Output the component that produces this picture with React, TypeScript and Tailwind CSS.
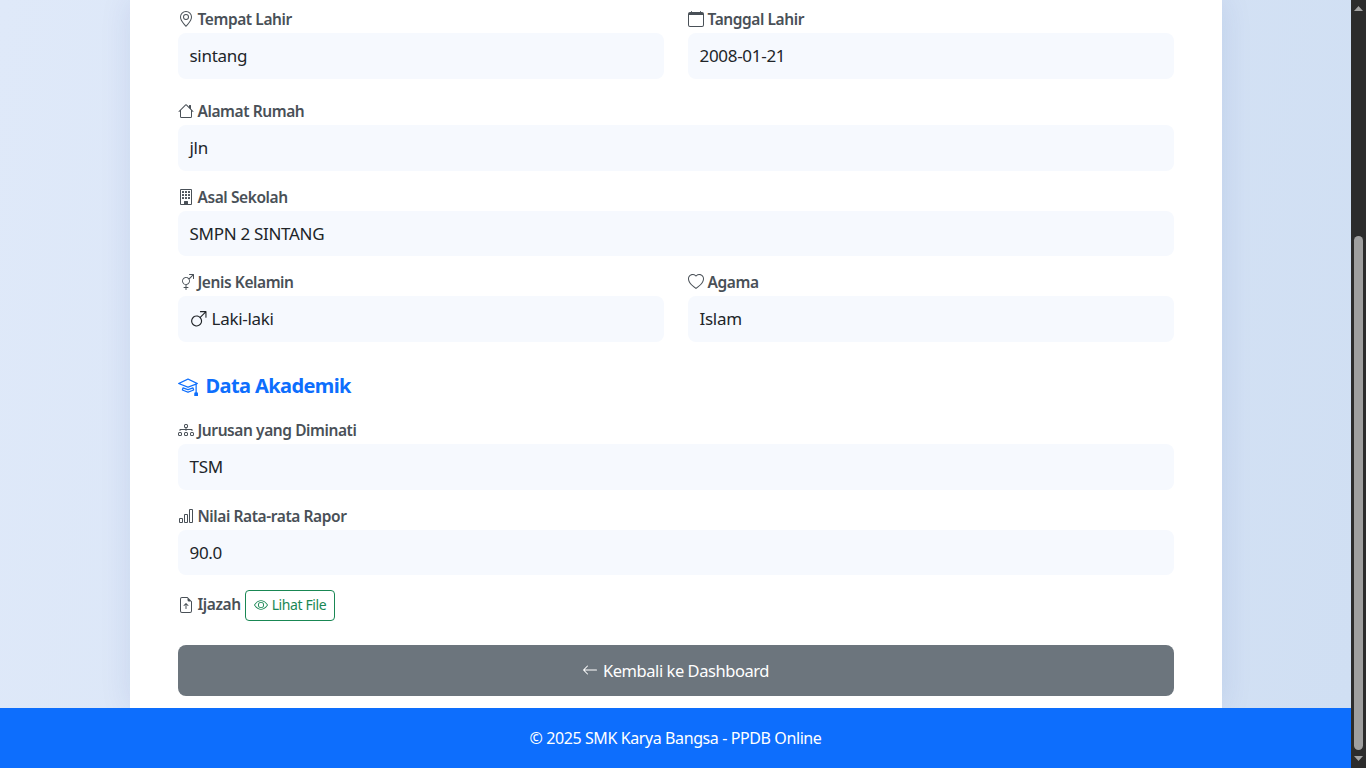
import React from "react";
import {
  BsArrowLeft,
  BsBarChart,
  BsBuilding,
  BsCalendar,
  BsDiagram3,
  BsEye,
  BsFileEarmarkArrowUp,
  BsGenderAmbiguous,
  BsGenderMale,
  BsGeoAlt,
  BsHeart,
  BsHouse,
  BsMortarboard,
} from "react-icons/bs";

type FieldProps = {
  icon: React.ReactNode;
  label: string;
  children: React.ReactNode;
};

function Field({ icon, label, children }: FieldProps) {
  return (
    <div className="min-w-0 flex-1">
      <div className="mb-1 flex h-5 items-center gap-1 text-[15.5px] font-semibold tracking-[-0.42px] text-[#495057]">
        {icon}
        <span className="pt-[2px]">{label}</span>
      </div>
      <div className="flex h-[45.5px] items-center gap-[4.5px] rounded-lg bg-[#f6f9fe] px-3 text-[17px] tracking-[-0.3px] text-[#212529]">
        {children}
      </div>
    </div>
  );
}

export default function App() {
  return (
    <div className="flex h-screen overflow-hidden font-['Noto_Sans',sans-serif] text-base">
      <div className="flex min-w-0 flex-1 flex-col">
        {/* scrolled form area */}
        <main className="flex flex-1 justify-center overflow-hidden bg-[linear-gradient(100deg,#dfe9f9,#d0dff3)]">
          <div className="flex h-full w-[1092px] flex-col bg-white px-12 pt-[9px] pb-3 shadow-[0_0_30px_rgba(0,50,150,0.1)]">
            <div className="flex gap-6">
              <Field icon={<BsGeoAlt className="h-4 w-4" />} label="Tempat Lahir">sintang</Field>
              <Field icon={<BsCalendar className="h-4 w-4" />} label="Tanggal Lahir">2008-01-21</Field>
            </div>

            <div className="mt-[22.5px]">
              <Field icon={<BsHouse className="h-4 w-4" />} label="Alamat Rumah">jln</Field>
            </div>
            <div className="mt-4">
              <Field icon={<BsBuilding className="h-4 w-4" />} label="Asal Sekolah">SMPN 2 SINTANG</Field>
            </div>
            <div className="mt-4 flex gap-6">
              <Field icon={<BsGenderAmbiguous className="h-4 w-4" />} label="Jenis Kelamin">
                <BsGenderMale className="h-[17.6px] w-[17.6px]" />
                Laki-laki
              </Field>
              <Field icon={<BsHeart className="h-4 w-4" />} label="Agama">Islam</Field>
            </div>

            <h2 className="mt-8 flex h-6 items-center gap-2 text-xl font-bold tracking-[-0.6px] text-[#0d6efd]">
              <BsMortarboard className="h-5 w-5" />
              Data Akademik
            </h2>

            <div className="mt-[22.5px]">
              <Field icon={<BsDiagram3 className="h-4 w-4" />} label="Jurusan yang Diminati">TSM</Field>
            </div>
            <div className="mt-4">
              <Field icon={<BsBarChart className="h-4 w-4" />} label="Nilai Rata-rata Rapor">90.0</Field>
            </div>

            <div className="mt-[14.5px] flex h-[31px] items-center gap-1">
              <div className="flex items-center gap-1 text-[15.5px] font-semibold tracking-[-0.42px] text-[#495057]">
                <BsFileEarmarkArrowUp className="h-4 w-4" />
                <span>Ijazah</span>
              </div>
              <button className="flex h-[31px] items-center gap-1 rounded border border-[#198754] px-2 text-sm tracking-[-0.4px] text-[#198754]">
                <BsEye className="h-3.5 w-3.5" />
                Lihat File
              </button>
            </div>

            <button className="mt-6 flex h-[51px] items-center justify-center gap-[5px] rounded-lg bg-[#6c757d] text-[16.5px] tracking-[-0.45px] text-white">
              <BsArrowLeft className="h-4 w-4" />
              <span className="pt-[2px]">Kembali ke Dashboard</span>
            </button>
          </div>
        </main>

        <footer className="flex h-[60px] items-center justify-center bg-[#0d6efd] tracking-[-0.4px] text-white">
          © 2025 SMK Karya Bangsa - PPDB Online
        </footer>
      </div>

      {/* browser scrollbar */}
      <div className="flex w-[15px] flex-col items-center bg-[#2c2c2c]">
        <svg viewBox="0 0 9 5" className="mt-[6px] h-[5px] w-[9px] fill-[#a3a3a3]">
          <path d="M4.5 0L9 5H0z" />
        </svg>
        <div className="mt-[225px] h-[514px] w-[9px] rounded-full bg-[#9f9f9f]" />
        <svg viewBox="0 0 9 5" className="mt-[6px] h-[5px] w-[9px] fill-[#a3a3a3]">
          <path d="M4.5 5L9 0H0z" />
        </svg>
      </div>
    </div>
  );
}
